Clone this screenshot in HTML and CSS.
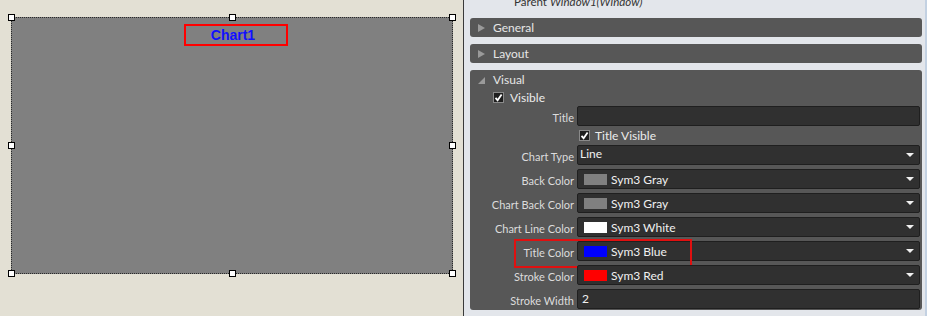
FILE: index.html
```html
<!DOCTYPE html>
<html>
<head>
<meta charset="utf-8">
<link rel="stylesheet" href="styles.css">
</head>
<body>
<div class="app">
  <div class="designer">
    <div class="chart">
      <div class="chart-title"><span>Chart1</span></div>
      <i class="h h-tl"></i><i class="h h-tm"></i><i class="h h-tr"></i>
      <i class="h h-ml"></i><i class="h h-mr"></i>
      <i class="h h-bl"></i><i class="h h-bm"></i><i class="h h-br"></i>
    </div>
  </div>
  <div class="panel">
    <div class="parent"><span class="parent-text">Parent <em>Window1(Window)</em></span></div>
    <div class="section collapsed">
      <div class="sec-head"><span class="tri-right"></span><span>General</span></div>
    </div>
    <div class="section collapsed">
      <div class="sec-head"><span class="tri-right"></span><span>Layout</span></div>
    </div>
    <div class="section visual">
      <div class="sec-head vis-head"><span class="tri-open"></span><span>Visual</span></div>
      <div class="check-row top-check">
        <span class="cb"><svg width="9" height="9" viewBox="0 0 9 9"><path d="M1.5 4.8 L3.6 7.2 L7.6 1.6" fill="none" stroke="#fff" stroke-width="1.8"/></svg></span>
        <span>Visible</span>
      </div>
      <div class="prop title-prop">
        <label class="lbl">Title</label>
        <div class="field"></div>
      </div>
      <div class="check-row field-check">
        <span class="cb"><svg width="9" height="9" viewBox="0 0 9 9"><path d="M1.5 4.8 L3.6 7.2 L7.6 1.6" fill="none" stroke="#fff" stroke-width="1.8"/></svg></span>
        <span>Title Visible</span>
      </div>
      <div class="prop">
        <label class="lbl">Chart Type</label>
        <div class="field select"><span class="val plain">Line</span><span class="arrow"></span></div>
      </div>
      <div class="prop">
        <label class="lbl">Back Color</label>
        <div class="field select"><span class="sw gray"></span><span class="val">Sym3 Gray</span><span class="arrow"></span></div>
      </div>
      <div class="prop">
        <label class="lbl">Chart Back Color</label>
        <div class="field select"><span class="sw gray"></span><span class="val">Sym3 Gray</span><span class="arrow"></span></div>
      </div>
      <div class="prop">
        <label class="lbl">Chart Line Color</label>
        <div class="field select"><span class="sw white"></span><span class="val">Sym3 White</span><span class="arrow"></span></div>
      </div>
      <div class="prop highlight">
        <label class="lbl">Title Color</label>
        <div class="field select"><span class="sw blue"></span><span class="val">Sym3 Blue</span><span class="arrow"></span></div>
      </div>
      <div class="prop">
        <label class="lbl">Stroke Color</label>
        <div class="field select"><span class="sw red"></span><span class="val">Sym3 Red</span><span class="arrow"></span></div>
      </div>
      <div class="prop last">
        <label class="lbl">Stroke Width</label>
        <div class="field"><span class="val num">2</span></div>
      </div>
    </div>
  </div>
</div>
</body>
</html>
```

FILE: styles.css
```css
* { box-sizing: border-box; }
html, body { margin: 0; padding: 0; }
body {
  width: 927px;
  height: 316px;
  overflow: hidden;
  background: #e3e0d4;
  font-family: "Liberation Sans", Arial, sans-serif;
}
.app { display: flex; width: 927px; height: 316px; }

.designer { width: 463px; flex: none; padding: 17px 0 0 11px; }
.chart {
  position: relative;
  width: 442px;
  height: 257px;
  background: #808080;
  border: 1px dotted #2a2a2a;
  padding-top: 6px;
}
.chart-title {
  width: 104px;
  height: 22px;
  margin-left: 172px;
  border: 2px solid #ff0000;
  display: flex;
  align-items: center;
  justify-content: center;
  padding-right: 6px;
}
.chart-title span {
  color: #1010ff;
  font-weight: bold;
  font-size: 14px;
  line-height: 16px;
}
.h {
  position: absolute;
  width: 7px;
  height: 7px;
  background: #fff;
  border: 1px solid #000;
}
.h-tl { left: -4px; top: -4px; }
.h-tm { left: 217px; top: -4px; }
.h-tr { right: -4px; top: -4px; }
.h-ml { left: -4px; top: 124px; }
.h-mr { right: -4px; top: 124px; }
.h-bl { left: -4px; bottom: -4px; }
.h-bm { left: 217px; bottom: -4px; }
.h-br { right: -4px; bottom: -4px; }

.panel {
  flex: 1;
  background: #e3e6eb;
  border-left: 1px solid #3a3a3a;
  border-right: 2px solid #c3d1e2;
  padding: 0 3px 0 6px;
  font-family: "Lato", "Liberation Sans", sans-serif;
  font-size: 11px;
}
.parent {
  height: 18px;
  overflow: hidden;
  padding-left: 44px;
  color: #333;
}
.parent-text { display: block; margin-top: -5px; line-height: 14px; font-size: 11.5px; }
.parent em { font-style: italic; }

.section {
  background: #575757;
  border-radius: 3px;
  margin-bottom: 7px;
  color: #e6e6e6;
}
.sec-head {
  height: 19px;
  display: flex;
  align-items: center;
  padding-left: 8px;
  gap: 8px;
  font-size: 12px;
}
.tri-right {
  width: 0; height: 0;
  border-top: 4.5px solid transparent;
  border-bottom: 4.5px solid transparent;
  border-left: 7px solid #9a9a9a;
}
.tri-open {
  width: 0; height: 0;
  border-left: 7px solid transparent;
  border-bottom: 7px solid #9a9a9a;
  margin-top: 3px;
}
.visual { height: 240px; }
.vis-head { height: 18px; }

.check-row {
  display: flex;
  align-items: center;
  gap: 6px;
  font-size: 12px;
  color: #ececec;
}
.top-check { height: 18px; padding-left: 23px; }
.field-check { height: 19px; padding-left: 109px; gap: 5px; }
.cb {
  width: 11px;
  height: 11px;
  background: #1e1e1e;
  border: 1px solid #8a8a8a;
  display: flex;
  align-items: center;
  justify-content: center;
}
.cb svg { display: block; }

.prop {
  position: relative;
  display: flex;
  height: 20px;
  margin-bottom: 4px;
  gap: 3px;
}
.title-prop { margin-bottom: 0; }
.lbl {
  width: 104px;
  flex: none;
  text-align: right;
  color: #dcdcdc;
  line-height: 20px;
  padding-top: 2px;
  font-size: 11px;
}
.field {
  width: 343px;
  flex: none;
  background: #303030;
  border: 1px solid #1f1f1f;
  border-radius: 2px;
  display: flex;
  align-items: center;
  padding-left: 6px;
  color: #f0f0f0;
  font-size: 12px;
}
.sw {
  width: 23px;
  height: 11px;
  flex: none;
  margin-right: 4px;
}
.sw.gray { background: #808080; }
.sw.white { background: #ffffff; }
.sw.blue { background: #0000ff; }
.sw.red { background: #ff0000; }
.val.plain { margin-left: -4px; margin-top: -4px; }
.val.num { margin-left: -2px; margin-top: -2px; }
.arrow {
  margin-left: auto;
  margin-right: 5px;
  width: 0; height: 0;
  border-left: 4px solid transparent;
  border-right: 4px solid transparent;
  border-top: 4px solid #f0f0f0;
}
.highlight::after {
  content: "";
  position: absolute;
  left: 44px;
  top: -2px;
  width: 174px;
  height: 25px;
  border: 2px solid #e01010;
  pointer-events: none;
}
.last { margin-bottom: 0; }
```
